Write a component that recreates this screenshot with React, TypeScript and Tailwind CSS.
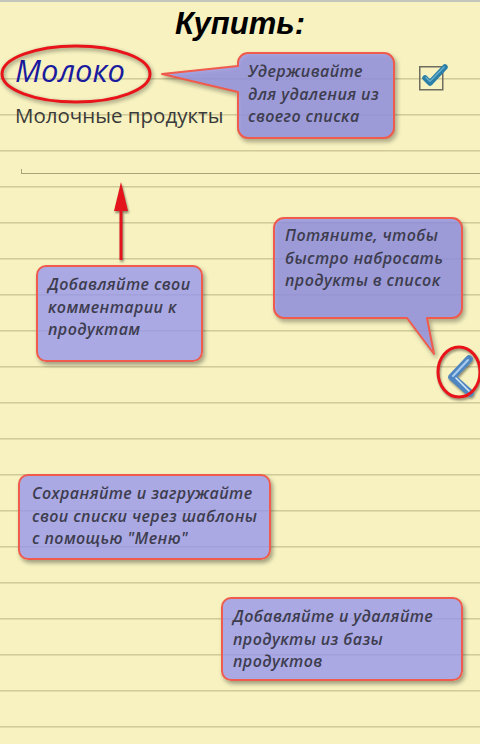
import type { ReactNode } from "react";

const hint =
  "font-['Open_Sans',sans-serif] italic font-semibold text-[16px] leading-[22.5px] tracking-[0.4px] text-[#3e3d4f]";

function Box({ className, children }: { className: string; children: ReactNode }) {
  return (
    <div
      className={`absolute rounded-[10px] border-2 border-[#ef5b4c] bg-[rgba(150,150,235,0.8)] shadow-[2px_3px_4px_rgba(0,0,0,0.35)] ${className}`}
    >
      <div className={hint}>{children}</div>
    </div>
  );
}

function Bubble({ className, path, children }: { className: string; path: string; children: ReactNode }) {
  return (
    <div className={`absolute ${className}`}>
      <svg className="absolute left-0 top-0 h-full w-full overflow-visible drop-shadow-[2px_3px_2px_rgba(0,0,0,0.35)]">
        <path d={path} fill="rgba(150,150,235,0.8)" stroke="#ef5b4c" strokeWidth="2" strokeLinejoin="round" />
      </svg>
      <div className={`relative ${hint}`}>{children}</div>
    </div>
  );
}

export default function App() {
  return (
    <div className="relative h-[744px] w-[480px] overflow-hidden border-t-2 border-[#c4c5bd] [background:linear-gradient(#f7f2c0,#f7f2c0)_0_0/100%_72px_no-repeat,repeating-linear-gradient(to_bottom,transparent_0px,transparent_4px,#d1ca99_4px,#d1ca99_5px,#e2dcab_5px,#e2dcab_6px,transparent_6px,transparent_36px),#f7f2c0]">
      <h1 className="pt-[4px] text-center font-['Liberation_Sans',sans-serif] text-[31px] font-bold italic leading-[36px] text-black">
        Купить:
      </h1>

      <div className="flex justify-between">
        <div className="pl-[15px] font-['Open_Sans',sans-serif]">
          <div className="mt-[10px] text-[31px] italic leading-[36px] text-[#1a1a9e]">Молоко</div>
          <div className="mt-[13px] text-[20.5px] leading-[28px] text-[#3a3a3a]">Молочные продукты</div>
        </div>
        <div className="mr-[37px] mt-[21px] h-[24px] w-[24px]">
          <svg width="34" height="28" viewBox="0 0 34 28" className="overflow-visible">
            <rect x="0.75" y="3.75" width="23" height="23" fill="none" stroke="#6f6c60" strokeWidth="1.5" />
            <path d="M6 15 L11 20 L26 4" fill="none" stroke="#2c7fa6" strokeWidth="5.5" strokeLinecap="round" strokeLinejoin="round" />
            <path d="M7 14.5 L11 18.5 L25 4" fill="none" stroke="#6fb4d2" strokeWidth="1.2" strokeLinecap="round" />
          </svg>
        </div>
      </div>

      <div className="ml-[21px] mt-[40px] h-[5px] border-b border-l border-[#a9a27a]" />

      {/* подсказки */}
      <svg className="absolute left-0 top-[41px] h-[64px] w-[156px] drop-shadow-[1px_2px_2px_rgba(0,0,0,0.45)]">
        <ellipse cx="76" cy="31" rx="74" ry="28" fill="none" stroke="#e8141a" strokeWidth="3" />
      </svg>

      <Bubble
        className="left-[237px] top-[50px] h-[87px] w-[158px] pl-[11px] pt-[8px]"
        path="M11 1 H147 A10 10 0 0 1 157 11 V76 A10 10 0 0 1 147 86 H11 A10 10 0 0 1 1 76 V40 L-75 22 L1 14 V11 A10 10 0 0 1 11 1 Z"
      >
        <div>Удерживайте</div>
        <div>для удаления из</div>
        <div>своего списка</div>
      </Bubble>

      <svg className="absolute left-[110px] top-[178px] h-[84px] w-[24px] drop-shadow-[1px_2px_1px_rgba(0,0,0,0.45)]">
        <line x1="11" y1="26" x2="11" y2="80" stroke="#e3141b" strokeWidth="3" />
        <polygon points="11,2 4,31 18,31" fill="#e3141b" />
      </svg>

      <Box className="left-[36px] top-[263px] h-[97px] w-[167px] pl-[10px] pt-[6px]">
        <div>Добавляйте свои</div>
        <div>комментарии к</div>
        <div>продуктам</div>
      </Box>

      <Bubble
        className="left-[273px] top-[215px] h-[102px] w-[190px] pl-[12px] pt-[7px]"
        path="M11 1 H179 A10 10 0 0 1 189 11 V91 A10 10 0 0 1 179 101 H154 L161 137 L134 101 H11 A10 10 0 0 1 1 91 V11 A10 10 0 0 1 11 1 Z"
      >
        <div>Потяните, чтобы</div>
        <div>быстро набросать</div>
        <div>продукты в список</div>
      </Bubble>

      {/* ручка справа */}
      <svg className="absolute left-[436px] top-[343px] h-[54px] w-[46px] drop-shadow-[1px_2px_1px_rgba(0,0,0,0.4)]">
        <path d="M33 14 L16 32 L34 48" fill="none" stroke="#4f86c2" strokeWidth="7.5" strokeLinecap="round" strokeLinejoin="round" />
        <path d="M32 15 L17 31" fill="none" stroke="#a9cdef" strokeWidth="2" strokeLinecap="round" />
        <path d="M20 33 L33 46" fill="none" stroke="#d8ecfb" strokeWidth="1.5" strokeLinecap="round" />
        <ellipse cx="23" cy="27" rx="21" ry="25" fill="none" stroke="#e8141a" strokeWidth="3" />
      </svg>

      <Box className="left-[18px] top-[472px] h-[86px] w-[253px] pl-[12px] pt-[6px]">
        <div>Сохраняйте и загружайте</div>
        <div>свои списки через шаблоны</div>
        <div>с помощью "Меню"</div>
      </Box>

      <Box className="left-[221px] top-[595px] h-[84px] w-[242px] pl-[10px] pt-[6px]">
        <div>Добавляйте и удаляйте</div>
        <div>продукты из базы</div>
        <div>продуктов</div>
      </Box>
    </div>
  );
}
